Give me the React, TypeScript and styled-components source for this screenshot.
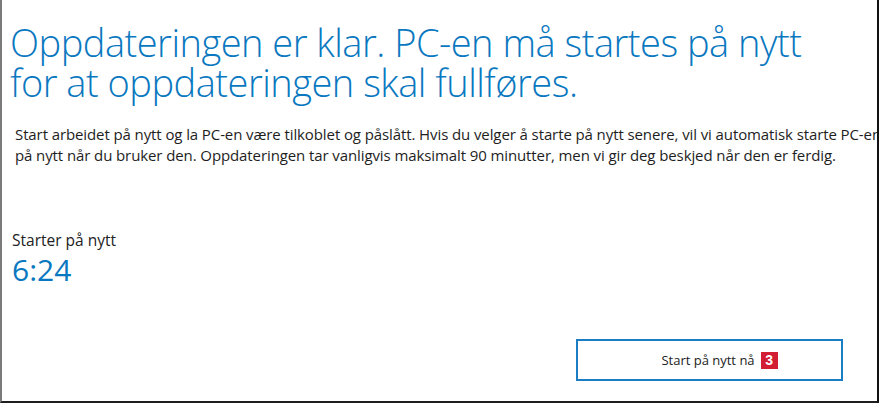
import styled, { createGlobalStyle } from 'styled-components'

const Global = createGlobalStyle`
  html, body { margin: 0; padding: 0; background: #fff; }
  body { font-family: "Open Sans", "Noto Sans", sans-serif; }
`

const Frame = styled.div`
  box-sizing: border-box;
  width: 879px;
  height: 403px;
  overflow: hidden;
  background: #fff;
  border-left: 2px solid #7b7b7b;
  border-right: 2px solid #111;
  border-bottom: 2px solid #1e1e1e;
  display: flex;
  flex-direction: column;
`

const Title = styled.h1`
  margin: 0;
  padding: 22px 0 0 8px;
  font-size: 38px;
  font-weight: 300;
  line-height: 40px;
  color: #0a78c0;
  letter-spacing: -0.5px;
`

const Body = styled.div`
  margin-top: 22px;
  padding-left: 13px;
  font-size: 15px;
  line-height: 21px;
  color: #1e1e1e;
  letter-spacing: -0.1px;
`

const Line = styled.div`
  white-space: nowrap;
`

const Countdown = styled.div`
  margin-top: 63px;
  padding-left: 10px;
  display: flex;
  flex-direction: column;
`

const Label = styled.div`
  font-size: 15.5px;
  line-height: 22px;
  color: #222;
`

const Time = styled.div`
  font-size: 30px;
  font-weight: 400;
  line-height: 38px;
  color: #0a78c0;
`

const Footer = styled.div`
  margin-top: auto;
  padding: 0 34px 20px 0;
  display: flex;
  justify-content: flex-end;
`

const RestartButton = styled.button`
  box-sizing: border-box;
  width: 267px;
  height: 42px;
  border: 2px solid #1b7dc4;
  background: #fff;
  font-family: "Open Sans", "Noto Sans", sans-serif;
  font-size: 13px;
  color: #222;
  display: flex;
  align-items: center;
  justify-content: center;
  gap: 6px;
  padding: 0 0 0 20px;
`

const Badge = styled.span`
  display: inline-flex;
  align-items: center;
  justify-content: center;
  width: 17px;
  height: 17px;
  background: #d21f33;
  color: #fff;
  font-family: "Liberation Sans", Arial, sans-serif;
  font-weight: 700;
  font-size: 14px;
`

export default function App() {
  return (
    <>
      <Global />
      <Frame>
        <Title>
          Oppdateringen er klar. PC-en må startes på nytt
          <br />
          for at oppdateringen skal fullføres.
        </Title>
        <Body>
          <Line>Start arbeidet på nytt og la PC-en være tilkoblet og påslått. Hvis du velger å starte på nytt senere, vil vi automatisk starte PC-en</Line>
          <Line>på nytt når du bruker den. Oppdateringen tar vanligvis maksimalt 90 minutter, men vi gir deg beskjed når den er ferdig.</Line>
        </Body>
        <Countdown>
          <Label>Starter på nytt</Label>
          <Time>6:24</Time>
        </Countdown>
        <Footer>
          <RestartButton>
            Start på nytt nå <Badge>3</Badge>
          </RestartButton>
        </Footer>
      </Frame>
    </>
  )
}
